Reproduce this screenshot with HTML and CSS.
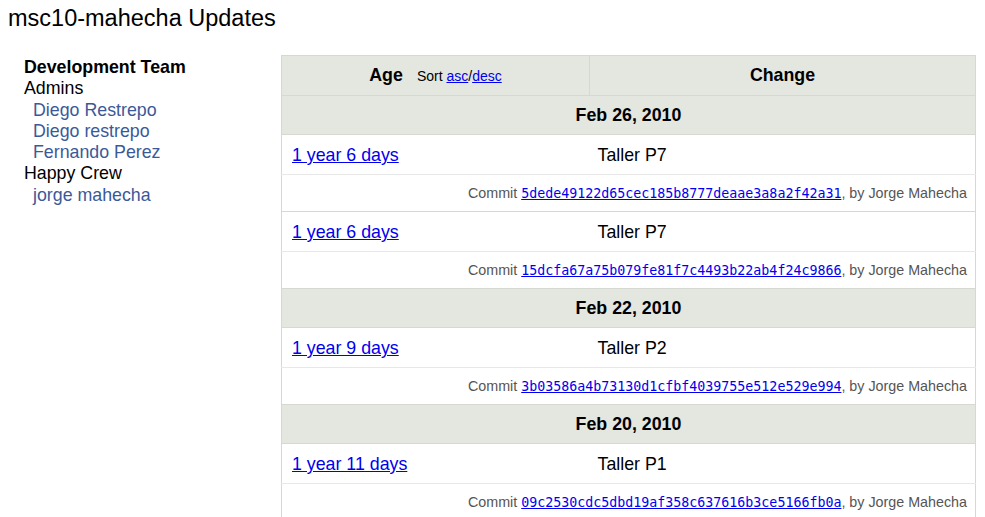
FILE: index.html
```html
<!DOCTYPE html>
<html>
<head>
<meta charset="utf-8">
<title>msc10-mahecha Updates</title>
<link rel="stylesheet" href="styles.css">
</head>
<body>
<h1 class="title">msc10-mahecha Updates</h1>
<div class="page">
  <div class="sidebar">
    <div class="team">Development Team</div>
    <div class="group">Admins</div>
    <a class="member" href="#">Diego Restrepo</a>
    <a class="member" href="#">Diego restrepo</a>
    <a class="member" href="#">Fernando Perez</a>
    <div class="group">Happy Crew</div>
    <a class="member" href="#">jorge mahecha</a>
  </div>
  <table class="updates">
    <tr class="head">
      <th class="col-age"><span class="age-label">Age</span><span class="sort">Sort <a href="#">asc</a>/<a href="#">desc</a></span></th>
      <th class="col-change">Change</th>
    </tr>
    <tr class="date"><td colspan="2">Feb 26, 2010</td></tr>
    <tr class="entry"><td class="age"><a href="#">1 year 6 days</a></td><td class="change">Taller P7</td></tr>
    <tr class="commit"><td colspan="2">Commit <a class="hash" href="#">5dede49122d65cec185b8777deaae3a8a2f42a31</a>, by Jorge Mahecha</td></tr>
    <tr class="entry"><td class="age"><a href="#">1 year 6 days</a></td><td class="change">Taller P7</td></tr>
    <tr class="commit"><td colspan="2">Commit <a class="hash" href="#">15dcfa67a75b079fe81f7c4493b22ab4f24c9866</a>, by Jorge Mahecha</td></tr>
    <tr class="date"><td colspan="2">Feb 22, 2010</td></tr>
    <tr class="entry"><td class="age"><a href="#">1 year 9 days</a></td><td class="change">Taller P2</td></tr>
    <tr class="commit"><td colspan="2">Commit <a class="hash" href="#">3b03586a4b73130d1cfbf4039755e512e529e994</a>, by Jorge Mahecha</td></tr>
    <tr class="date"><td colspan="2">Feb 20, 2010</td></tr>
    <tr class="entry"><td class="age"><a href="#">1 year 11 days</a></td><td class="change">Taller P1</td></tr>
    <tr class="commit"><td colspan="2">Commit <a class="hash" href="#">09c2530cdc5dbd19af358c637616b3ce5166fb0a</a>, by Jorge Mahecha</td></tr>
  </table>
</div>
</body>
</html>
```
FILE: styles.css
```css
body {
  margin: 8px;
  font-family: "Liberation Sans", Arial, sans-serif;
  color: #000;
  background: #fff;
}
.title {
  margin: 0 0 27px 0;
  font-size: 23.5px;
  font-weight: normal;
  line-height: 20px;
}
.page {
  display: flex;
  align-items: flex-start;
}
.sidebar {
  width: 257px;
  padding-left: 16px;
  padding-top: 2px;
  display: flex;
  flex-direction: column;
  font-size: 17.8px;
  line-height: 21.3px;
}
.team {
  font-weight: bold;
}
.member {
  color: #3b5998;
  text-decoration: none;
  padding-left: 9px;
}
.updates {
  width: 695px;
  border-collapse: collapse;
  border: 1px solid #d6d9d2;
  font-size: 17.8px;
}
.updates td, .updates th {
  padding: 0;
}
.head th {
  height: 39px;
  background: #e4e6e0;
  border-bottom: 1px solid #d6d9d2;
  text-align: center;
  font-weight: bold;
}
.col-age {
  width: 307px;
  border-right: 1px solid #d6d9d2;
}
.age-label {
  margin-right: 14px;
}
.sort {
  font-weight: normal;
  font-size: 14px;
}
.sort a {
  color: #0000ee;
}
.date td {
  height: 38px;
  background: #e4e6e0;
  border-bottom: 1px solid #d6d9d2;
  text-align: center;
  font-weight: bold;
}
.entry td {
  height: 37px;
  padding-top: 2px !important;
  border-bottom: 1px solid #e8e8e8;
}
.age {
  padding-left: 10px !important;
}
.age a {
  color: #0000ee;
}
.change {
  padding-left: 8px !important;
}
.commit td {
  height: 36px;
  border-bottom: 1px solid #d6d9d2;
  text-align: right;
  padding-right: 8px !important;
  font-size: 14.3px;
  color: #555;
}
.hash {
  font-family: "DejaVu Sans Mono", monospace;
  font-size: 13.3px;
  color: #0000ee;
}
```
